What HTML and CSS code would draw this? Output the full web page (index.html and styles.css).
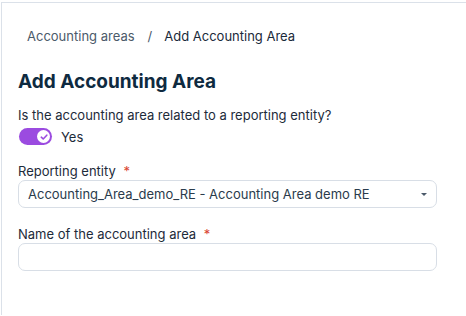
FILE: index.html
```html
<!DOCTYPE html>
<html lang="en">
<head>
    <meta charset="UTF-8">
    <meta name="viewport" content="width=device-width, initial-scale=1.0">
    <title>Add Accounting Area</title>
    <link rel="stylesheet" href="styles.css">
</head>
<body>
    <div class="frame">
        <nav class="breadcrumb">
            <span class="crumb">Accounting areas</span>
            <span class="sep">/</span>
            <span class="crumb current">Add Accounting Area</span>
        </nav>

        <h1 class="title">Add Accounting Area</h1>

        <div class="field first">
            <div class="question">Is the accounting area related to a reporting entity?</div>
            <div class="toggle-row">
                <span class="toggle">
                    <span class="knob">
                        <svg width="10" height="10" viewBox="0 0 10 10">
                            <path d="M2.3 5.2 L4.2 7 L7.8 3.2" fill="none" stroke="#9b4be0" stroke-width="1.6" stroke-linecap="round" stroke-linejoin="round"/>
                        </svg>
                    </span>
                </span>
                <span class="toggle-label">Yes</span>
            </div>
        </div>

        <div class="field">
            <label class="label">Reporting entity <span class="req">*</span></label>
            <div class="select">
                <span class="select-value">Accounting_Area_demo_RE - Accounting Area demo RE</span>
                <span class="caret"></span>
            </div>
        </div>

        <div class="field">
            <label class="label">Name of the accounting area <span class="req">*</span></label>
            <div class="input"></div>
        </div>
    </div>
</body>
</html>
```

FILE: styles.css
```css
body {
    margin: 0;
    padding: 0;
    background-color: #fff;
    font-family: Inter, "Noto Sans", sans-serif;
    color: #1d2b3a;
}

.frame {
    margin-top: 2px;
    margin-left: 1px;
    border-top: 1px solid #dbe1e9;
    border-left: 1px solid #dbe1e9;
    height: 313px;
    box-sizing: border-box;
    padding: 0 29px 0 16px;
}

.breadcrumb {
    display: flex;
    align-items: center;
    padding: 24px 0 0 9px;
    font-size: 13px;
    height: 17px;
}

.crumb {
    color: #4b5a6a;
}

.crumb.current {
    color: #1a2a3a;
}

.sep {
    color: #4b5a6a;
    margin: 0 12px 0 13px;
}

.title {
    margin: 26px 0 0 0;
    font-size: 19px;
    font-weight: 700;
    color: #0e2a40;
    line-height: 24px;
}

.field {
    margin-top: 18px;
}

.field.first {
    margin-top: 13px;
}

.question {
    font-size: 13px;
    line-height: 17px;
    color: #1d2b3a;
}

.toggle-row {
    display: flex;
    align-items: center;
    margin-top: 4px;
}

.toggle {
    width: 33px;
    height: 17px;
    border-radius: 9px;
    background-color: #9b4be0;
    display: flex;
    align-items: center;
    justify-content: flex-end;
    padding-right: 2px;
    box-sizing: border-box;
    margin-left: 1px;
}

.knob {
    width: 13px;
    height: 13px;
    border-radius: 50%;
    background-color: #fff;
    display: flex;
    align-items: center;
    justify-content: center;
}

.toggle-label {
    font-size: 13px;
    margin-left: 9px;
    color: #1d2b3a;
}

.label {
    display: block;
    font-size: 13px;
    line-height: 17px;
    color: #1d2b3a;
}

.req {
    color: #d9432f;
    margin-left: 4px;
}

.select,
.input {
    margin-top: 0;
    height: 28px;
    border: 1px solid #d8dee6;
    border-radius: 7px;
    box-sizing: border-box;
}

.select {
    display: flex;
    align-items: center;
    justify-content: space-between;
    padding: 0 9px;
}

.select-value {
    font-size: 13px;
    color: #2a3b4c;
}

.caret {
    width: 0;
    height: 0;
    border-left: 3px solid transparent;
    border-right: 3px solid transparent;
    border-top: 3px solid #4b5a6a;
}
```
